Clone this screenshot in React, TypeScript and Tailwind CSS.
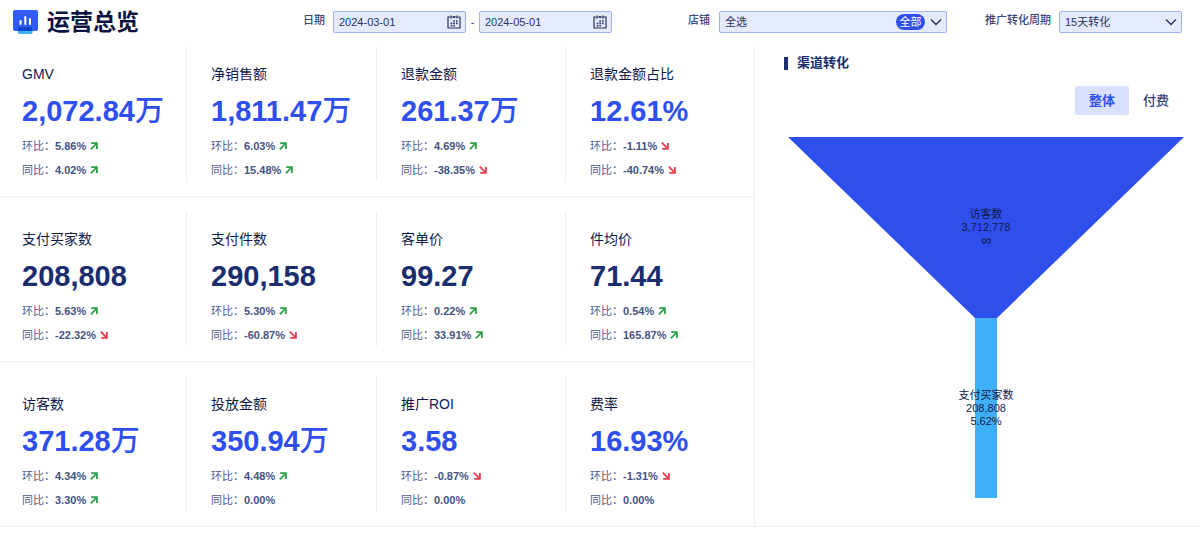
import { useState } from 'react'
import clsx from 'clsx'

type Metric = {
  name: string
  value: string
  unit?: string
  dark?: boolean
  mom: number
  yoy: number
}

const rows: Metric[][] = [
  [
    { name: 'GMV', value: '2,072.84', unit: '万', mom: 5.86, yoy: 4.02 },
    { name: '净销售额', value: '1,811.47', unit: '万', mom: 6.03, yoy: 15.48 },
    { name: '退款金额', value: '261.37', unit: '万', mom: 4.69, yoy: -38.35 },
    { name: '退款金额占比', value: '12.61%', mom: -1.11, yoy: -40.74 },
  ],
  [
    { name: '支付买家数', value: '208,808', dark: true, mom: 5.63, yoy: -22.32 },
    { name: '支付件数', value: '290,158', dark: true, mom: 5.3, yoy: -60.87 },
    { name: '客单价', value: '99.27', dark: true, mom: 0.22, yoy: 33.91 },
    { name: '件均价', value: '71.44', dark: true, mom: 0.54, yoy: 165.87 },
  ],
  [
    { name: '访客数', value: '371.28', unit: '万', mom: 4.34, yoy: 3.3 },
    { name: '投放金额', value: '350.94', unit: '万', mom: 4.48, yoy: 0 },
    { name: '推广ROI', value: '3.58', mom: -0.87, yoy: 0 },
    { name: '费率', value: '16.93%', mom: -1.31, yoy: 0 },
  ],
]

const fieldClass =
  'h-[22px] w-full appearance-none rounded-[2px] border border-[#9fb2f8] bg-[#e5eafd] pl-[5px] text-[11px] leading-5 text-[#26335f] outline-none'

function Logo() {
  return (
    <svg className="h-6 w-[25px] shrink-0" viewBox="0 0 25 24" aria-hidden="true">
      <rect width="25" height="21" rx="2" fill="#2f5bff" />
      <path d="M5 17h14.500v5.500a1.500 1.500 0 0 1-1.500 1.500h-11.500a1.500 1.500 0 0 1-1.500-1.500z" fill="#36b3f8" />
      <path d="M5 17h14.500v4h-14.500z" fill="#0c45c9" />
      <path d="M7.500 11v3M12.300 7v7M17 9v5" stroke="#fff" strokeWidth="2" strokeLinecap="round" />
    </svg>
  )
}

function CalendarIcon() {
  return (
    <svg
      className="pointer-events-none absolute right-[5px] top-1 size-[14px]"
      viewBox="0 0 14 14"
      fill="none"
      stroke="#26335f"
      aria-hidden="true"
    >
      <path d="M3 2H1v11h12V2h-2M5 2h4" strokeWidth="1.200" />
      <path d="M4 .5v3M10 .5v3M7 1v2" strokeWidth="1.400" />
      <path d="M6.300 6h1.600M9 6h1.600M3.700 8.400h1.600M6.300 8.400h1.600M9 8.400h1.600M3.700 10.800h1.600M6.300 10.800h1.600" strokeWidth="1.600" />
    </svg>
  )
}

function Chevron() {
  return (
    <svg
      className="pointer-events-none absolute right-[5px] top-[7px] h-2 w-3"
      viewBox="0 0 12 8"
      fill="none"
      stroke="#26335f"
      strokeWidth="1.400"
      aria-hidden="true"
    >
      <path d="M1 1.500l5 5 5-5" />
    </svg>
  )
}

function Trend({ label, value }: { label: string; value: number }) {
  return (
    <div className="flex h-[22px] items-center text-[11px] text-[#4d5b8c]">
      <span>{label}：</span>
      <b className="text-[#45527f]">{value.toFixed(2)}%</b>
      {value !== 0 && (
        <svg
          className={clsx('ml-1 size-2', value > 0 ? 'text-[#2fa14b]' : 'text-[#e63c4c]')}
          viewBox="0 0 8 8"
          fill="none"
          stroke="currentColor"
          strokeWidth="1.800"
          aria-hidden="true"
        >
          {value > 0 ? <path d="M.8 7.300L6.500 1.600M1.200 1.200H6.900V6.900" /> : <path d="M.8 .7L6.500 6.400M1.200 6.800H6.900V1.100" />}
        </svg>
      )}
    </div>
  )
}

function MetricCell({ metric }: { metric: Metric }) {
  return (
    <div className="border-r border-[#ecedf5] pl-6 pt-4 first:pl-[22px] last:border-r-0">
      <h2 className="text-[14px] leading-[22px] text-[#0f1a4a]">{metric.name}</h2>
      <p
        className={clsx(
          'mt-2.5 text-[29px] leading-8 font-bold whitespace-nowrap',
          metric.dark ? 'text-[#1a2d6e]' : 'text-[#2f4fed]'
        )}
      >
        {metric.value}
        {metric.unit && <span className="font-medium">{metric.unit}</span>}
      </p>
      <div className="mt-2 flex flex-col gap-0.5">
        <Trend label="环比" value={metric.mom} />
        <Trend label="同比" value={metric.yoy} />
      </div>
    </div>
  )
}

function Funnel() {
  return (
    <svg
      className="block w-full"
      viewBox="0 0 396 361"
      fontSize="11"
      textAnchor="middle"
      fill="#0f1a4a"
    >
      <path d="M0 0H396L209 181H187z" fill="#2f4fed" />
      <path d="M187 181H209V361H187z" fill="#3fb0f7" />
      <text x="198" y="81">访客数</text>
      <text x="198" y="94">3,712,778</text>
      <text x="198" y="108" fontSize="14">∞</text>
      <text x="198" y="262">支付买家数</text>
      <text x="198" y="275">208,808</text>
      <text x="198" y="288">5.62%</text>
    </svg>
  )
}

export default function App() {
  const [tab, setTab] = useState('整体')

  return (
    <div className="min-h-screen bg-white font-['Liberation_Sans','Noto_Sans_CJK_SC',sans-serif]">
      <header className="flex h-[47px] items-start pl-[13px] pr-[18px] pt-[11px] text-[11px] text-[#3a4778]">
        <div className="flex h-[22px] flex-1 items-center gap-[9px]">
          <Logo />
          <h1 className="text-[23px] leading-[22px] font-bold whitespace-nowrap text-[#0b1440]">运营总览</h1>
        </div>

        <div className="flex">
          <label htmlFor="start" className="mr-2 leading-[18px] font-medium">日期</label>
          <div className="relative w-[133px]">
            <input id="start" type="text" defaultValue="2024-03-01" className={fieldClass} />
            <CalendarIcon />
          </div>
          <span className="w-[13px] text-center leading-[22px]">-</span>
          <div className="relative w-[133px]">
            <input type="text" aria-label="结束日期" defaultValue="2024-05-01" className={fieldClass} />
            <CalendarIcon />
          </div>
        </div>

        <div className="ml-[76px] flex">
          <label htmlFor="shop" className="mr-[9px] leading-[18px] font-medium">店铺</label>
          <div className="relative w-[228px]">
            <select id="shop" className={fieldClass}>
              <option>全选</option>
            </select>
            <span className="pointer-events-none absolute right-[22px] top-[3px] h-4 w-[29px] rounded-full bg-[#2f4fed] text-center leading-4 text-white">
              全部
            </span>
            <Chevron />
          </div>
        </div>

        <div className="ml-[38px] flex">
          <label htmlFor="period" className="mr-2 leading-[18px] font-medium">推广转化周期</label>
          <div className="relative w-[123px]">
            <select id="period" className={fieldClass}>
              <option>15天转化</option>
            </select>
            <Chevron />
          </div>
        </div>
      </header>

      <main className="grid grid-cols-[755fr_445fr] border-b border-[#ecedf5]">
        <section className="border-r border-[#ecedf5]">
          {rows.map((row, i) => (
            <div
              key={i}
              className="grid grid-cols-[187fr_190fr_189fr_188fr] border-b border-[#ecedf5] pb-[15px] pt-[15px] first:pt-0 last:border-b-0"
            >
              {row.map((metric) => (
                <MetricCell key={metric.name} metric={metric} />
              ))}
            </div>
          ))}
        </section>

        {/* Channel conversion */}
        <section className="pl-[33px] pr-4 pt-[7px]">
          <h2 className="-ml-1 flex h-[18px] items-center gap-[9px] text-[13px] font-bold text-[#1a2d6e]">
            <span className="h-[13px] w-1 bg-[#1a2d6e]" />
            渠道转化
          </h2>
          <div className="mt-[14px] mb-[22px] flex justify-end pr-px text-[13px]">
            {['整体', '付费'].map((name) => (
              <button
                key={name}
                type="button"
                onClick={() => setTab(name)}
                className={clsx(
                  'h-[29px] w-[54px] rounded-[2px]',
                  tab === name ? 'bg-[#d8e0fe] font-bold text-[#2f4fed]' : 'font-medium text-[#33427c]'
                )}
              >
                {name}
              </button>
            ))}
          </div>
          <Funnel />
        </section>
      </main>
    </div>
  )
}
